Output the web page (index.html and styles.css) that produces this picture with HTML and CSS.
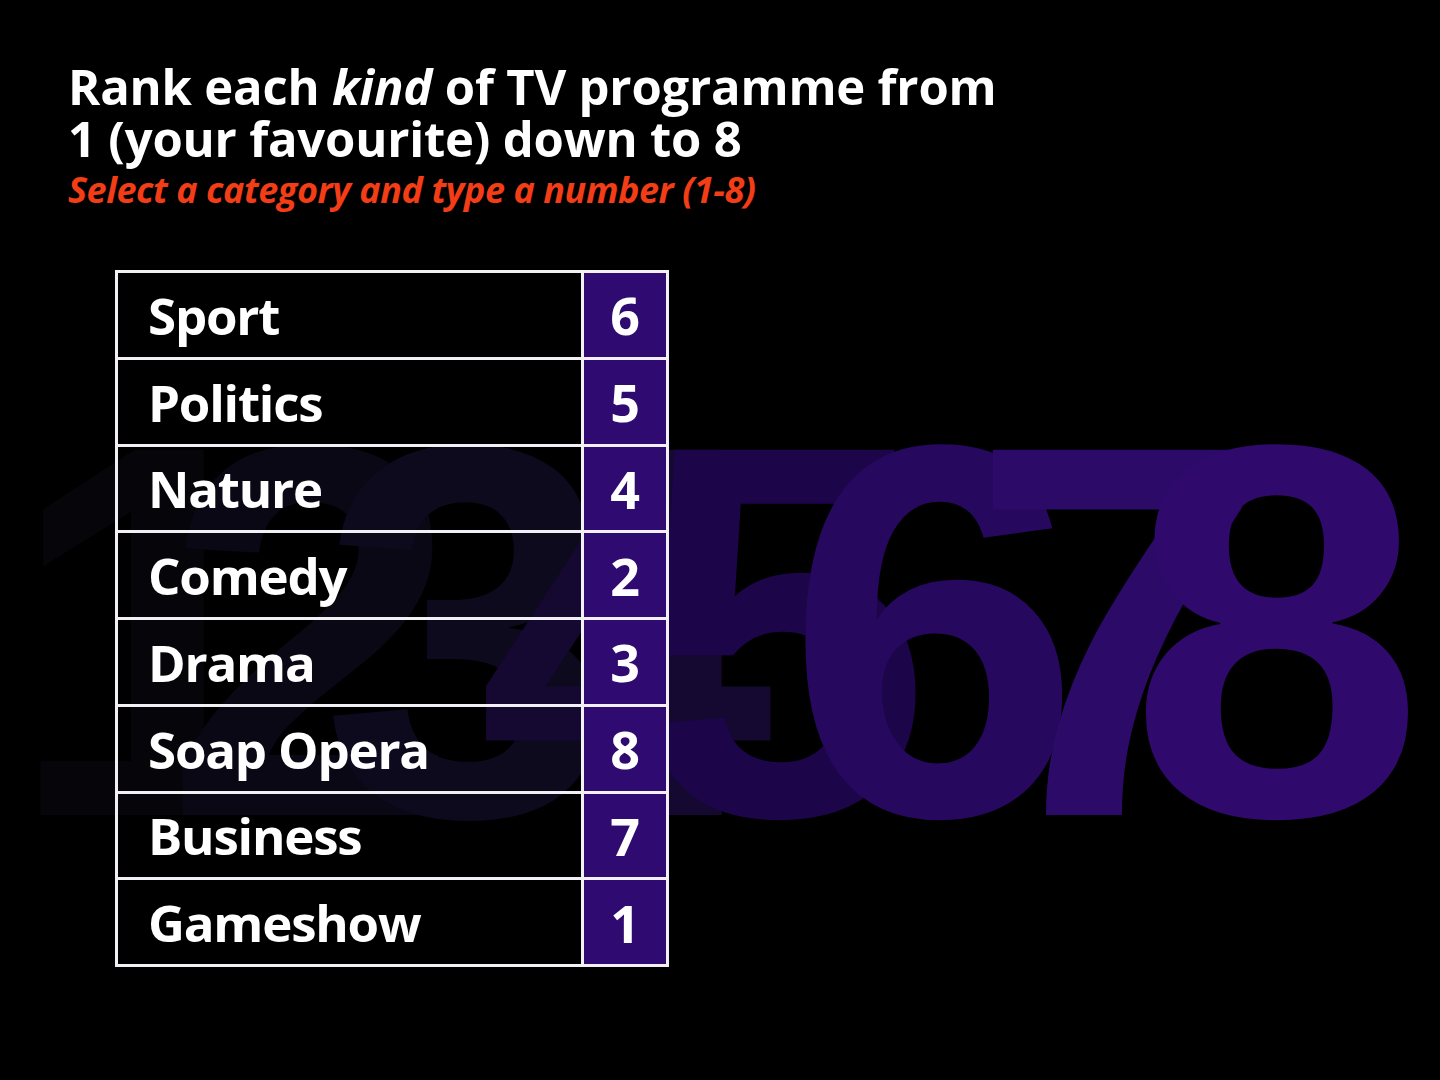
FILE: index.html
```html
<!DOCTYPE html>
<html lang="en">
<head>
<meta charset="utf-8">
<title>Rank TV programmes</title>
<link rel="stylesheet" href="styles.css">
</head>
<body>
<div class="stage">
  <div class="bg-digits" aria-hidden="true">
    <span class="d d1">1</span><span class="d d2">2</span><span class="d d3">3</span><span class="d d4">4</span><span class="d d5">5</span><span class="d d6">6</span><span class="d d7">7</span><span class="d d8">8</span>
  </div>
  <header class="intro">
    <h1 class="title">Rank each <em>kind</em> of TV programme from<br>1 (your favourite) down to 8</h1>
    <p class="hint">Select a category and type a number (1-8)</p>
  </header>
  <div class="rank-table">
    <div class="label">Sport</div><div class="num">6</div>
    <div class="label">Politics</div><div class="num">5</div>
    <div class="label">Nature</div><div class="num">4</div>
    <div class="label">Comedy</div><div class="num">2</div>
    <div class="label">Drama</div><div class="num">3</div>
    <div class="label">Soap Opera</div><div class="num">8</div>
    <div class="label">Business</div><div class="num">7</div>
    <div class="label">Gameshow</div><div class="num">1</div>
  </div>
</div>
</body>
</html>
```
FILE: styles.css
```css
html, body {
  margin: 0;
  padding: 0;
  background: #000;
}
.stage {
  position: relative;
  width: 1440px;
  height: 1080px;
  overflow: hidden;
  background: #000;
  font-family: "Open Sans", "DejaVu Sans", sans-serif;
  color: #fff;
}
.bg-digits {
  position: absolute;
  left: 7px;
  top: 366px;
  display: flex;
  font-family: "Liberation Sans", Arial, sans-serif;
  font-weight: 700;
  font-size: 531px;
  line-height: 1;
  z-index: 0;
}
.d {
  display: block;
  overflow: visible;
  white-space: nowrap;
}
.d1 { width: 157px; color: #060509; }
.d2 { width: 157px; color: #0a0814; }
.d3 { width: 157px; color: #0e0a1e; }
.d4 { width: 157px; color: #150831; }
.d5 { width: 151px; color: #1c0649; }
.d6 { width: 184px; color: #26095f; }
.d7 { width: 159px; color: #2b0a68; }
.d8 { color: #2f0a6c; }

.intro {
  position: relative;
  z-index: 1;
  padding: 60px 0 0 68px;
}
.title {
  margin: 0;
  font-size: 49px;
  font-weight: 700;
  line-height: 52px;
  letter-spacing: -0.2px;
  color: #fff;
}
.title em {
  font-style: italic;
}
.hint {
  margin: 4px 0 0;
  font-size: 36px;
  line-height: 44px;
  font-weight: 700;
  font-style: italic;
  letter-spacing: -0.45px;
  color: #f23d17;
}
.rank-table {
  position: relative;
  z-index: 1;
  margin: 58px 0 0 115px;
  width: 554px;
  display: grid;
  grid-template-columns: 1fr 82px;
  grid-auto-rows: 83.75px;
  gap: 3px;
  padding: 3px;
  box-sizing: border-box;
  outline: 3px solid #f2f0f4;
  outline-offset: -3px;
}
.label {
  display: flex;
  align-items: center;
  padding-left: 30px;
  font-size: 51px;
  font-weight: 700;
  letter-spacing: -1.2px;
  color: #fff;
  box-shadow: 0 0 0 3px #f2f0f4;
}
.num {
  display: flex;
  align-items: center;
  justify-content: center;
  background: #2f0a70;
  font-size: 52px;
  font-weight: 700;
  color: #fff;
  box-shadow: 0 0 0 3px #f2f0f4;
}
```
